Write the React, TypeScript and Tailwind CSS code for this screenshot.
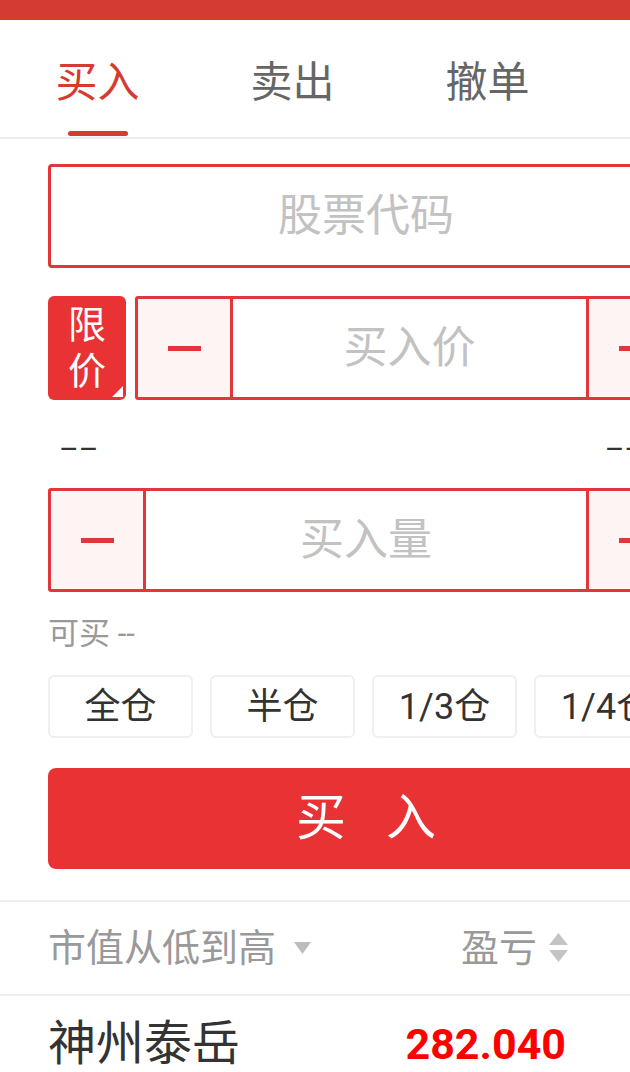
import React from "react";

const RED = "border-[#e3363a]";

const Minus = () => <span className="block w-[33px] h-[5px] bg-[#e3363a]" />;

const Plus = () => (
  <span className="relative block w-[33px] h-[33px]">
    <span className="absolute left-0 top-[14px] w-[33px] h-[5px] bg-[#e3363a]" />
    <span className="absolute top-0 left-[14px] w-[5px] h-[33px] bg-[#e3363a]" />
  </span>
);

const Stepper = ({ placeholder, withBadge }: { placeholder: string; withBadge?: boolean }) => (
  <div className="flex h-[104px] gap-[9px]">
    {withBadge && (
      <div className="relative w-[78px] shrink-0 rounded-[6px] bg-[#e83234] flex flex-col items-center justify-center text-white text-[38px] leading-[46px]">
        <span>限</span>
        <span>价</span>
        <svg className="absolute right-[3px] bottom-[3px]" width="11" height="11" viewBox="0 0 11 11">
          <polygon points="11,0 11,11 0,11" fill="#fff" />
        </svg>
      </div>
    )}
    <div className={`flex flex-1 border-[3px] ${RED} rounded-[3px] overflow-hidden`}>
      <div className={`w-[95px] shrink-0 bg-[#fff4f4] border-r-[3px] ${RED} flex items-center justify-center`}>
        <Minus />
      </div>
      <div className="flex-1 flex items-center justify-center text-[44px] text-[#c2c2c2]">{placeholder}</div>
      <div className={`w-[95px] shrink-0 bg-[#fff4f4] border-l-[3px] ${RED} flex items-center justify-center`}>
        <Plus />
      </div>
    </div>
  </div>
);

export default function App() {
  const tabs = ["买入", "卖出", "撤单"];
  const ratios = ["全仓", "半仓", "1/3仓", "1/4仓"];

  return (
    <div
      className="w-[630px] h-[1072px] overflow-hidden bg-white"
      style={{ fontFamily: 'Roboto, "Noto Sans CJK SC", sans-serif' }}
    >
      <div className="w-[732px]">
        {/* top bar */}
        <div className="h-[20px] bg-[#d43c33]" />

        {/* tabs */}
        <div className="flex h-[119px] border-b-2 border-[#eeeeee]">
          {tabs.map((t, i) => (
            <div key={t} className="w-[195px] shrink-0 flex flex-col items-center pt-[42px]">
              <span className={`text-[42px] leading-[42px] ${i === 0 ? "text-[#d43c33]" : "text-[#666666]"}`}>{t}</span>
              {i === 0 && <span className="mt-[27px] w-[60px] h-[5px] rounded-full bg-[#d43c33]" />}
            </div>
          ))}
        </div>

        <div className="px-[48px]">
          {/* stock code */}
          <div className={`mt-[25px] h-[104px] border-[3px] ${RED} rounded-[4px] flex items-center justify-center text-[44px] text-[#c2c2c2]`}>
            股票代码
          </div>

          {/* price */}
          <div className="mt-[28px]">
            <Stepper placeholder="买入价" withBadge />
          </div>

          {/* limits */}
          <div className="h-[88px] flex items-center justify-between pt-[8px] pl-[11px] pr-[40px] text-[30px] text-[#333333]">
            <span>––</span>
            <span>––</span>
          </div>

          {/* quantity */}
          <Stepper placeholder="买入量" />

          <div className="mt-[26px] text-[31px] leading-[31px] text-[#999999]">可买 --</div>

          {/* ratio buttons */}
          <div className="mt-[26px] flex gap-[17px]">
            {ratios.map((r) => (
              <div
                key={r}
                className="w-[145px] h-[63px] rounded-[6px] border-2 border-[#efefef] flex items-center justify-center text-[36px] text-[#333333]"
              >
                {r}
              </div>
            ))}
          </div>

          {/* buy button */}
          <div className="mt-[30px] h-[101px] rounded-[8px] bg-[#e93233] flex items-center justify-center gap-[40px] text-[50px] text-white">
            <span>买</span>
            <span>入</span>
          </div>
        </div>

        {/* list header */}
        <div className="mt-[31px] border-t-2 border-b-2 border-[#eeeeee] h-[96px] flex items-center px-[48px] text-[38px] text-[#999999]">
          <div className="flex items-center gap-[18px]">
            <span>市值从低到高</span>
            <svg width="17" height="12" viewBox="0 0 17 12">
              <polygon points="0,0 17,0 8.5,12" fill="#bdbdbd" />
            </svg>
          </div>
          <div className="ml-auto mr-[116px] flex items-center gap-[12px]">
            <span>盈亏</span>
            <svg width="19" height="30" viewBox="0 0 19 30">
              <polygon points="9.5,0 19,12 0,12" fill="#c4c4c4" />
              <polygon points="0,17 19,17 9.5,29" fill="#c4c4c4" />
            </svg>
          </div>
        </div>

        {/* row */}
        <div className="flex items-center px-[48px] pt-[22px]">
          <span className="text-[48px] leading-[52px] text-[#333333]">神州泰岳</span>
          <span className="ml-auto mr-[118px] text-[43px] leading-[52px] font-bold text-[#ff0000]">282.040</span>
        </div>
      </div>
    </div>
  );
}
